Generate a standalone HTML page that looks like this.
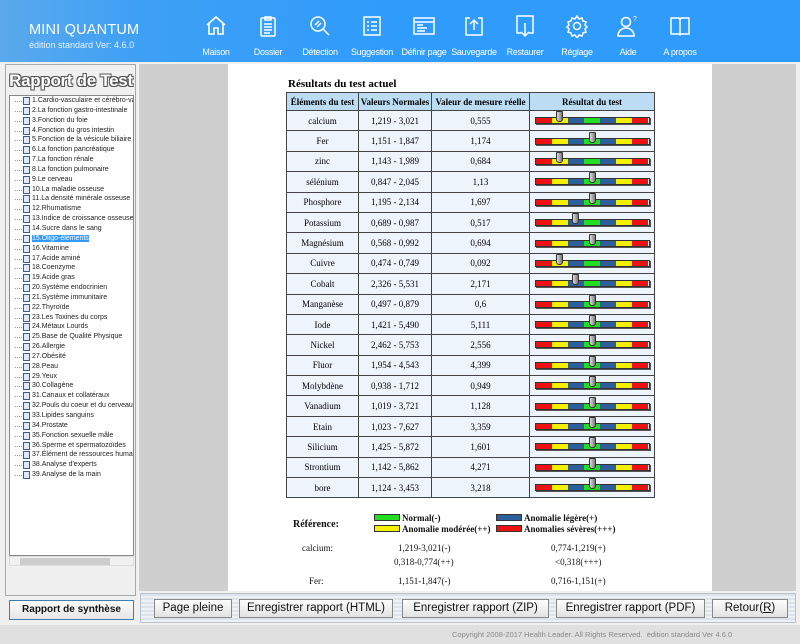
<!DOCTYPE html>
<html><head><meta charset="utf-8"><style>
*{margin:0;padding:0;box-sizing:border-box}
body{width:800px;height:644px;overflow:hidden;background:#f0f0f0;font-family:"Liberation Sans",sans-serif;position:relative}
.hdr{position:absolute;left:0;top:0;width:800px;height:62px;background:linear-gradient(90deg,#5aa9ec 0,#3ea0f5 140px,#2f9bfb 400px,#2f9bfb 800px)}
.title{position:absolute;left:29px;top:22px;color:#fff;font-size:14.5px;letter-spacing:.2px}
.ver{position:absolute;left:29px;top:40px;color:#e8f2ff;font-size:9px}
.nav{position:absolute;top:14px;width:60px;text-align:center;color:#fff;font-size:9px;letter-spacing:-.3px;white-space:nowrap}
.nav svg{display:block;margin:0 auto 9px;width:24px;height:24px}
.left{position:absolute;left:5px;top:64px;width:131px;height:532px;border:1px solid #a9a9a9;background:#f0f0f0}
.rt{position:absolute;left:2px;top:2px;width:126px;height:28px;font-size:17px;color:#fff;font-weight:bold;text-align:center;line-height:28px;text-shadow:-1px -1px 0 #555,1px -1px 0 #555,-1px 1px 0 #555,1px 1px 0 #555;letter-spacing:-.3px}
.tree{position:absolute;left:3px;top:30px;width:125px;height:461px;background:#fff;border:1px solid #888;overflow:hidden}
.it{position:relative;height:9.85px;font-size:7px;line-height:9.85px;padding-left:22px;white-space:nowrap;color:#222}
.it:before{content:"";position:absolute;left:5px;top:5px;width:7px;border-top:1px dotted #999}
.it i{position:absolute;left:13px;top:1px;width:7px;height:8px;border:1px solid #3a5e8c;background:#dfe9f7}
.it.sel span{background:#3399ff;color:#fff}
.sb{position:absolute;left:3px;top:491px;width:125px;height:10px;background:#f0f0f0;border:1px solid #ddd}
.sb b{position:absolute;left:10px;top:1px;width:90px;height:7px;background:#cdcdcd}
.rs{position:absolute;left:3px;top:535px;width:125px;height:20px;border:1px solid #3c7fb1;background:linear-gradient(#fbfbfb,#e6e6e6);font-size:10px;font-weight:bold;text-align:center;line-height:18px;color:#111}
.gray{position:absolute;left:139px;top:64px;width:89px;height:527px;background:#cfcfcf}
.grayr{position:absolute;left:712px;top:64px;width:84px;height:527px;background:#cfcfcf}
.main{position:absolute;left:228px;top:64px;width:484px;height:527px;background:#fff}
.rt2{position:absolute;left:288px;top:78px;font-family:"Liberation Serif",serif;font-weight:bold;font-size:11px}
table{position:absolute;left:286px;top:92px;border-collapse:collapse;table-layout:fixed;width:368px;font-family:"Liberation Serif",serif;font-size:9px}
td,th{border:1px solid #444;text-align:center;padding:0;white-space:nowrap;overflow:hidden}
th{background:#bcdcf4;height:18px;font-size:9px}
td{background:#eef4fc;height:20.4px}
.bar{position:relative;width:115px;height:7px;margin:0 auto;display:flex;border:1px solid #333;box-shadow:1px 1px 0 #555}
.bar s{flex:1}
.th{position:absolute;top:-7px;width:7px;height:11px;background:linear-gradient(90deg,#ddd,#777);border:1px solid #333;border-radius:1px 1px 3px 3px}
.ref{position:absolute;font-family:"Liberation Serif",serif;font-size:9px;color:#111;white-space:nowrap}
.sw{position:absolute;width:26px;height:7px;border:1px solid #333}
.bbar{position:absolute;left:140px;top:593px;width:656px;height:30px;background:repeating-linear-gradient(#dde3ea 0,#dde3ea 2px,#edf1f5 2px,#edf1f5 4px);border:1px solid #b8c2cc}
.btn{position:absolute;top:599px;height:19px;border:1px solid #888;background:linear-gradient(#fdfdfd,#e2e2e2);font-size:11.5px;text-align:center;line-height:17px;color:#111;white-space:nowrap}
.foot{position:absolute;left:0;top:625px;width:800px;height:19px;background:#e0e0e0}
.foot span{position:absolute;left:452px;top:5px;font-size:7.5px;color:#888}
</style></head><body>
<div class="hdr">
<div class="title">MINI QUANTUM</div>
<div class="ver">édition standard Ver: 4.6.0</div>
<div class="nav" style="left:186px"><svg viewBox="0 0 24 24" fill="none" stroke="#fff" stroke-width="1.6"><path d="M3 11L12 3l9 8M5 9v11h5v-6h4v6h5V9"/></svg>Maison</div>
<div class="nav" style="left:238px"><svg viewBox="0 0 24 24" fill="none" stroke="#fff" stroke-width="1.5"><rect x="5" y="4" width="14" height="18" rx="1"/><path d="M9 3h6v3H9zM8 10h8M8 13h8M8 16h8M8 19h6"/></svg>Dossier</div>
<div class="nav" style="left:290px"><svg viewBox="0 0 24 24" fill="none" stroke="#fff" stroke-width="1.5"><circle cx="10" cy="10" r="7"/><path d="M15 15l6 6M7 11l4-4M9 13l4-4"/></svg>Détection</div>
<div class="nav" style="left:342px"><svg viewBox="0 0 24 24" fill="none" stroke="#fff" stroke-width="1.5"><rect x="4" y="3" width="16" height="18"/><path d="M7 8h2M11 8h6M7 12h2M11 12h6M7 16h2M11 16h6"/></svg>Suggestion</div>
<div class="nav" style="left:394px"><svg viewBox="0 0 24 24" fill="none" stroke="#fff" stroke-width="1.5"><rect x="2" y="4" width="20" height="16"/><path d="M2 8h20M5 11h6M5 14h10M5 17h8"/></svg>Définir page</div>
<div class="nav" style="left:444px"><svg viewBox="0 0 24 24" fill="none" stroke="#fff" stroke-width="1.5"><path d="M8 4H4v17h16V4h-4M12 16V6M8 10l4-4 4 4"/></svg>Sauvegarde</div>
<div class="nav" style="left:495px"><svg viewBox="0 0 24 24" fill="none" stroke="#fff" stroke-width="1.5"><path d="M8 19H4V2h16v17h-4M12 9v13M8 18l4 4 4-4"/></svg>Restaurer</div>
<div class="nav" style="left:547px"><svg viewBox="0 0 24 24" fill="none" stroke="#fff" stroke-width="1.5"><circle cx="12" cy="12" r="3.5"/><path d="M12 2l2 3 3-1 1 3 3 1-1 3 2 2-2 2 1 3-3 1-1 3-3-1-2 3-2-3-3 1-1-3-3-1 1-3-2-2 2-2-1-3 3-1 1-3 3 1z"/></svg>Réglage</div>
<div class="nav" style="left:598px"><svg viewBox="0 0 24 24" fill="none" stroke="#fff" stroke-width="1.6"><circle cx="10" cy="8" r="4.5"/><path d="M2 22c0-5 4-8 8-8s8 3 8 8z"/><text x="17" y="7" font-size="7" fill="#fff" stroke="none" font-family="Liberation Sans">?</text></svg>Aide</div>
<div class="nav" style="left:650px"><svg viewBox="0 0 24 24" fill="none" stroke="#fff" stroke-width="1.5"><path d="M3 4h8l1 2 1-2h8v16h-8l-1 1-1-1H3zM12 6v15"/></svg>A propos</div>
</div>

<div class="left">
<div class="rt">Rapport de Test</div>
<div class="tree">
<div class="it"><i></i><span>1.Cardio-vasculaire et cérébro-vasculaire</span></div>
<div class="it"><i></i><span>2.La fonction gastro-intestinale</span></div>
<div class="it"><i></i><span>3.Fonction du foie</span></div>
<div class="it"><i></i><span>4.Fonction du gros intestin</span></div>
<div class="it"><i></i><span>5.Fonction de la vésicule biliaire</span></div>
<div class="it"><i></i><span>6.La fonction pancréatique</span></div>
<div class="it"><i></i><span>7.La fonction rénale</span></div>
<div class="it"><i></i><span>8.La fonction pulmonaire</span></div>
<div class="it"><i></i><span>9.Le cerveau</span></div>
<div class="it"><i></i><span>10.La maladie osseuse</span></div>
<div class="it"><i></i><span>11.La densité minérale osseuse</span></div>
<div class="it"><i></i><span>12.Rhumatisme</span></div>
<div class="it"><i></i><span>13.Indice de croissance osseuse</span></div>
<div class="it"><i></i><span>14.Sucre dans le sang</span></div>
<div class="it sel"><i></i><span>15.Oligo-éléments</span></div>
<div class="it"><i></i><span>16.Vitamine</span></div>
<div class="it"><i></i><span>17.Acide aminé</span></div>
<div class="it"><i></i><span>18.Coenzyme</span></div>
<div class="it"><i></i><span>19.Acide gras</span></div>
<div class="it"><i></i><span>20.Système endocrinien</span></div>
<div class="it"><i></i><span>21.Système immunitaire</span></div>
<div class="it"><i></i><span>22.Thyroïde</span></div>
<div class="it"><i></i><span>23.Les Toxines du corps</span></div>
<div class="it"><i></i><span>24.Métaux Lourds</span></div>
<div class="it"><i></i><span>25.Base de Qualité Physique</span></div>
<div class="it"><i></i><span>26.Allergie</span></div>
<div class="it"><i></i><span>27.Obésité</span></div>
<div class="it"><i></i><span>28.Peau</span></div>
<div class="it"><i></i><span>29.Yeux</span></div>
<div class="it"><i></i><span>30.Collagène</span></div>
<div class="it"><i></i><span>31.Canaux et collatéraux</span></div>
<div class="it"><i></i><span>32.Pouls du coeur et du cerveau</span></div>
<div class="it"><i></i><span>33.Lipides sanguins</span></div>
<div class="it"><i></i><span>34.Prostate</span></div>
<div class="it"><i></i><span>35.Fonction sexuelle mâle</span></div>
<div class="it"><i></i><span>36.Sperme et spermatozoïdes</span></div>
<div class="it"><i></i><span>37.Élément de ressources humaines</span></div>
<div class="it"><i></i><span>38.Analyse d'experts</span></div>
<div class="it"><i></i><span>39.Analyse de la main</span></div>
</div>
<div class="sb"><b></b></div>
<div class="rs">Rapport de synthèse</div>
</div>

<div class="gray"></div>
<div class="main"></div>
<div class="grayr"></div>
<div class="rt2">Résultats du test actuel</div>
<table>
<colgroup><col style="width:72px"><col style="width:73px"><col style="width:98px"><col style="width:125px"></colgroup>
<tr><th>Éléments du test</th><th>Valeurs Normales</th><th>Valeur de mesure réelle</th><th>Résultat du test</th></tr>
<tbody id="tb"></tbody>
</table>

<div class="ref" style="left:293px;top:519px;font-weight:bold;font-size:10px">Référence:</div>
<div class="sw" style="left:374px;top:514px;background:#22dd22"></div>
<div class="ref" style="left:402px;top:513px;font-weight:bold">Normal(-)</div>
<div class="sw" style="left:374px;top:525px;background:#f5f000"></div>
<div class="ref" style="left:402px;top:524px;font-weight:bold">Anomalie modérée(++)</div>
<div class="sw" style="left:496px;top:514px;background:#2d5f9a"></div>
<div class="ref" style="left:524px;top:513px;font-weight:bold">Anomalie légère(+)</div>
<div class="sw" style="left:496px;top:525px;background:#ee1111"></div>
<div class="ref" style="left:524px;top:524px;font-weight:bold">Anomalies sévères(+++)</div>
<div class="ref" style="left:302px;top:543px">calcium:</div>
<div class="ref" style="left:398px;top:543px">1,219-3,021(-)</div>
<div class="ref" style="left:551px;top:543px">0,774-1,219(+)</div>
<div class="ref" style="left:394px;top:557px">0,318-0,774(++)</div>
<div class="ref" style="left:555px;top:557px">&lt;0,318(+++)</div>
<div class="ref" style="left:309px;top:576px">Fer:</div>
<div class="ref" style="left:398px;top:576px">1,151-1,847(-)</div>
<div class="ref" style="left:551px;top:576px">0,716-1,151(+)</div>

<div class="bbar"></div>
<div class="btn" style="left:154px;width:78px">Page pleine</div>
<div class="btn" style="left:239px;width:154px">Enregistrer rapport (HTML)</div>
<div class="btn" style="left:402px;width:147px">Enregistrer rapport (ZIP)</div>
<div class="btn" style="left:556px;width:149px">Enregistrer rapport (PDF)</div>
<div class="btn" style="left:712px;width:76px">Retour(<u>R</u>)</div>
<div class="foot"><span>Copyright 2008-2017 Health Leader. All Rights Reserved.&nbsp; édition standard Ver 4.6.0</span></div>

<script>
var d=[["calcium","1,219 - 3,021","0,555",1],["Fer","1,151 - 1,847","1,174",3],["zinc","1,143 - 1,989","0,684",1],["sélénium","0,847 - 2,045","1,13",3],["Phosphore","1,195 - 2,134","1,697",3],["Potassium","0,689 - 0,987","0,517",2],["Magnésium","0,568 - 0,992","0,694",3],["Cuivre","0,474 - 0,749","0,092",1],["Cobalt","2,326 - 5,531","2,171",2],["Manganèse","0,497 - 0,879","0,6",3],["Iode","1,421 - 5,490","5,111",3],["Nickel","2,462 - 5,753","2,556",3],["Fluor","1,954 - 4,543","4,399",3],["Molybdène","0,938 - 1,712","0,949",3],["Vanadium","1,019 - 3,721","1,128",3],["Etain","1,023 - 7,627","3,359",3],["Silicium","1,425 - 5,872","1,601",3],["Strontium","1,142 - 5,862","4,271",3],["bore","1,124 - 3,453","3,218",3]];
var c=["#ee1111","#f5f000","#2d5f9a","#22dd22","#2d5f9a","#f5f000","#ee1111"],h="";
d.forEach(function(r){var s="";c.forEach(function(x){s+='<s style="background:'+x+'"></s>'});
h+='<tr><td>'+r[0]+'</td><td>'+r[1]+'</td><td>'+r[2]+'</td><td><div class="bar">'+s+'<div class="th" style="left:'+(r[3]*16.4+4)+'px"></div></div></td></tr>'});
document.getElementById("tb").innerHTML=h;
</script>
</body></html>
